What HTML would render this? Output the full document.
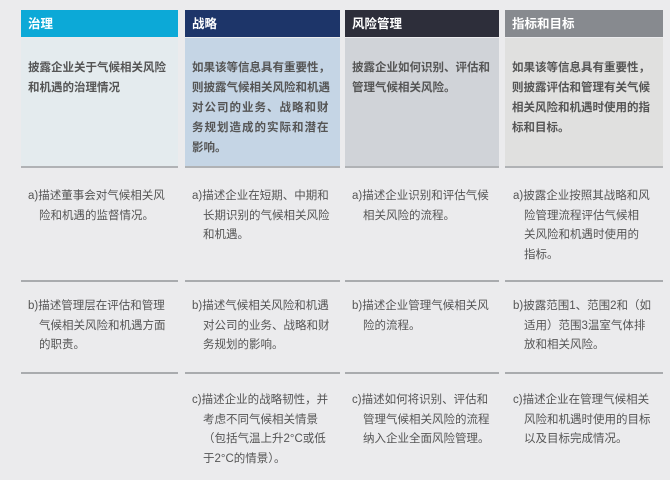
<!DOCTYPE html>
<html><head><meta charset="utf-8"><style>
body{margin:0;width:670px;height:480px;background:#ebebed;font-family:"Liberation Sans","Noto Sans CJK SC",sans-serif;position:relative;overflow:hidden}
.h{position:absolute;top:10px;height:27px;color:#fff;font-weight:bold;font-size:12.5px;line-height:29px;padding-left:7px;box-sizing:border-box}
.b{position:absolute;top:38px;height:130px;border-bottom:2px solid #b0b2b5;box-sizing:border-box;padding:20px 0 0 7px;font-weight:bold;color:#555;font-size:11.5px;line-height:20px;white-space:nowrap}
.l{position:absolute;height:2px;background:#a9abae}
.t{position:absolute;color:#555;font-size:11.5px;line-height:19.5px;white-space:nowrap}
.t i{font-style:normal;display:block;padding-left:11px}
</style></head><body>
<div class="h" style="left:21px;width:157px;background:#0ca9d7">治理</div>
<div class="h" style="left:185px;width:155px;background:#1d3569">战略</div>
<div class="h" style="left:345px;width:154px;background:#2d2e3a">风险管理</div>
<div class="h" style="left:505px;width:158px;background:#878a8f">指标和目标</div>
<div class="b" style="left:21px;width:157px;background:#e4ebee">披露企业关于气候相关风险<br>和机遇的治理情况</div>
<div class="b" style="left:185px;width:155px;background:#c5d5e5">如果该等信息具有重要性，<br>则披露气候相关风险和机遇<br><span style="letter-spacing:1px">对公司的业务、战略和财</span><br><span style="letter-spacing:1px">务规划造成的实际和潜在</span><br>影响。</div>
<div class="b" style="left:345px;width:154px;background:#d0d3d8">披露企业如何识别、评估和<br>管理气候相关风险。</div>
<div class="b" style="left:505px;width:158px;background:#e0e0df">如果该等信息具有重要性，<br>则披露评估和管理有关气候<br>相关风险和机遇时使用的指<br>标和目标。</div>
<div class="l" style="left:21px;width:157px;top:280px"></div>
<div class="l" style="left:185px;width:155px;top:280px"></div>
<div class="l" style="left:345px;width:154px;top:280px"></div>
<div class="l" style="left:505px;width:158px;top:280px"></div>
<div class="l" style="left:21px;width:157px;top:372px"></div>
<div class="l" style="left:185px;width:155px;top:372px"></div>
<div class="l" style="left:345px;width:154px;top:372px"></div>
<div class="l" style="left:505px;width:158px;top:372px"></div>
<div class="t" style="left:28px;top:187px">a)描述董事会对气候相关风<i>险和机遇的监督情况。</i></div>
<div class="t" style="left:192px;top:187px">a)描述企业在短期、中期和<i>长期识别的气候相关风险</i><i>和机遇。</i></div>
<div class="t" style="left:352px;top:187px">a)描述企业识别和评估气候<i>相关风险的流程。</i></div>
<div class="t" style="left:513px;top:187px">a)披露企业按照其战略和风<i>险管理流程评估气候相</i><i>关风险和机遇时使用的</i><i>指标。</i></div>
<div class="t" style="left:28px;top:297px">b)描述管理层在评估和管理<i>气候相关风险和机遇方面</i><i>的职责。</i></div>
<div class="t" style="left:192px;top:297px">b)描述气候相关风险和机遇<i>对公司的业务、战略和财</i><i>务规划的影响。</i></div>
<div class="t" style="left:352px;top:297px">b)描述企业管理气候相关风<i>险的流程。</i></div>
<div class="t" style="left:513px;top:297px">b)披露范围1、范围2和（如<i>适用）范围3温室气体排</i><i>放和相关风险。</i></div>
<div class="t" style="left:192px;top:391px">c)描述企业的战略韧性，并<i>考虑不同气候相关情景</i><i>（包括气温上升2°C或低</i><i>于2°C的情景）。</i></div>
<div class="t" style="left:352px;top:391px">c)描述如何将识别、评估和<i>管理气候相关风险的流程</i><i>纳入企业全面风险管理。</i></div>
<div class="t" style="left:513px;top:391px">c)描述企业在管理气候相关<i>风险和机遇时使用的目标</i><i>以及目标完成情况。</i></div>
</body></html>
